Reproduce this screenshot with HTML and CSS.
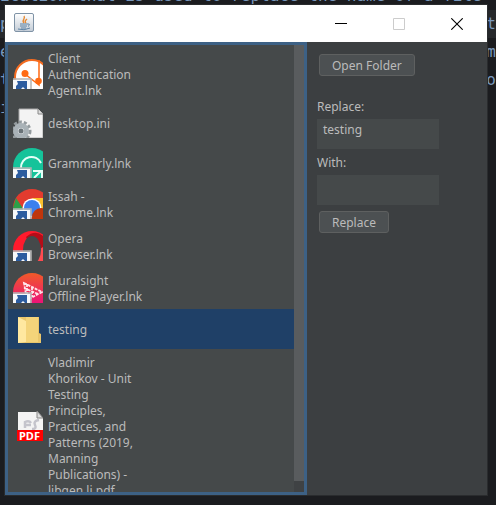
FILE: index.html
```
<!DOCTYPE html>
<html lang="en">
<head>
<meta charset="utf-8">
<title>File renamer</title>
<link rel="stylesheet" href="styles.css">
</head>
<body>
<div class="backdrop" aria-hidden="true">
  <div class="line"><span>ication that is used to replace the name of a file</span></div>
  <div class="line current"><span>p</span><span>t</span></div>
  <div class="line"><span>e</span><span>m</span></div>
  <div class="line"><span>t</span><span>o</span></div>
  <div class="line"><span>i</span></div>
</div>
<main class="window">
  <header class="titlebar">
    <svg class="java" viewBox="0 0 20 19">
      <defs><linearGradient id="jbg" x2="0" y2="1"><stop offset="0" stop-color="#fff"/><stop offset="1" stop-color="#c3ccd6"/></linearGradient></defs>
      <rect x=".5" y=".5" width="19" height="18" rx="1.5" fill="url(#jbg)" stroke="#7f93a6"/>
      <path d="M10 10C7 7 12 6 10 3M12 10C10 8 12 7 13 6" fill="none" stroke="#e58b35" stroke-width="1.4"/>
      <path d="M6 11h8M6 13h7M7 15h5M14 11q3 0 0 2.500M4 16q6 2 12-1" fill="none" stroke="#5c83a5"/>
    </svg>
    <div class="controls">
      <button type="button" aria-label="Minimize"><svg viewBox="0 0 12 12"><path d="M0 5.500h12" stroke="#000"/></svg></button>
      <button type="button" aria-label="Maximize" disabled><svg viewBox="0 0 12 12"><path d="M.5.5h11v11H.5z" fill="none" stroke="#ccc"/></svg></button>
      <button type="button" aria-label="Close"><svg viewBox="0 0 12 12"><path d="M.3.3l11.400 11.400M11.700.3L.3 11.700" stroke="#000" stroke-width="1.100"/></svg></button>
    </div>
  </header>
  <div class="content">
    <section class="files">
      <ul class="list">
        <li>
          <svg class="icon" viewBox="0 0 30 30">
            <circle cx="19" cy="18" r="17" fill="#fff" stroke="#f36c21" stroke-width="2"/>
            <path d="M26 1v25L12 15" fill="none" stroke="#ff6a13" stroke-width="1.500"/>
            <circle cx="12" cy="14.500" r="3.500" fill="#ff6a13"/><circle cx="25.500" cy="22" r="3.300" fill="#ff6a13"/>
            <use href="#shortcut"/>
          </svg>
          <span>Client Authentication Agent.lnk</span>
        </li>
        <li>
          <svg class="icon" viewBox="0 0 30 30">
            <path d="M6 1h19l5 5v24H6z" fill="#f3f3f3" stroke="#aaa"/><path d="M25 1v5h5" fill="#ddd" stroke="#888"/>
            <circle cx="8" cy="23" r="9" fill="none" stroke="#949b9e" stroke-width="3" stroke-dasharray="3 2"/>
            <circle cx="8" cy="23" r="5.500" fill="#e8edf0" stroke="#a9b2b7" stroke-width="5"/><circle cx="8" cy="23" r="2.500" fill="#697277"/>
          </svg>
          <span>desktop.ini</span>
        </li>
        <li>
          <svg class="icon" viewBox="0 0 30 30">
            <circle cx="19" cy="19" r="19" fill="#15c39a"/>
            <path d="M8 20a10.500 10.500 0 0 1 20-5" fill="none" stroke="#e5fff8" stroke-width="2"/>
            <path d="M20 23h10M29 22v8M28 23l-7 7" fill="none" stroke="#e5fff8" stroke-width="2"/>
            <use href="#shortcut"/>
          </svg>
          <span>Grammarly.lnk</span>
        </li>
        <li>
          <svg class="icon" viewBox="0 0 30 30">
            <circle cx="19" cy="19" r="19" fill="#e33b2e"/>
            <path d="M3 9l8 12v9H0V19z" fill="#2c9f48"/><path d="M19 9h11v11h-5z" fill="#fbc02d"/>
            <circle cx="19" cy="19" r="9.500" fill="#fff"/><circle cx="19" cy="19" r="8" fill="#3b80ed"/>
            <circle cx="28" cy="28" r="9" fill="#bf360c"/>
            <use href="#shortcut"/>
          </svg>
          <span>Issah - Chrome.lnk</span>
        </li>
        <li>
          <svg class="icon" viewBox="0 0 30 30">
            <circle cx="19" cy="19" r="19" fill="#ff1b2d"/><path d="M13 6Q22-2 30 5v25h-4z" fill="#b50d18"/><path d="M27 18l3-2v14h-6z" fill="#ff4b50"/>
            <ellipse cx="19" cy="19" rx="9" ry="14" fill="#45494a"/>
            <use href="#shortcut"/>
          </svg>
          <span>Opera Browser.lnk</span>
        </li>
        <li>
          <svg class="icon" viewBox="0 0 30 30">
            <defs><linearGradient id="ps" x2="0" y2="1"><stop offset="0" stop-color="#f05a28"/><stop offset="1" stop-color="#ec008c"/></linearGradient></defs>
            <circle cx="19" cy="19" r="19" fill="url(#ps)"/>
            <path d="M11 10l18 9-15 8zM11 15l14 6M14 11v15M19 14v10" fill="none" stroke="#ffe6ec" stroke-width="1.800" stroke-dasharray="3 1"/>
            <use href="#shortcut"/>
          </svg>
          <span>Pluralsight Offline&nbsp;Player.lnk</span>
        </li>
        <li class="selected">
          <svg class="icon" viewBox="0 0 30 30">
            <path d="M5 3h21v16l2 1v9H5z" fill="#e9c66b"/><path d="M13 3h12v25H13z" fill="#f4d47a"/><path d="M5 3l8 4v21l-8 1z" fill="#ffe8a0"/>
          </svg>
          <span>testing</span>
        </li>
        <li>
          <svg class="icon" viewBox="0 0 30 30">
            <path d="M5 1h20l5 6v12H5z" fill="#f4f4f4"/><path d="M24 0l6 7h-6z" fill="#ddd" stroke="#888"/>
            <path d="M12 17v-6q4-2 6 1M13 14h5M19 18q5 0 3-4t4-5" fill="none" stroke="#c4c4cc" stroke-width="2.500"/>
            <path d="M4 19h26v11H4z" fill="#f00"/>
            <text x="6" y="29" class="pdf">PDF</text>
          </svg>
          <span>Vladimir Khorikov - Unit Testing Principles, Practices, and Patterns (2019, Manning Publications) - libgen.li.pdf</span>
        </li>
      </ul>
      <div class="scrollbar"><div class="thumb"></div></div>
    </section>
    <form class="panel">
      <button type="button" class="btn open">Open Folder</button>
      <label for="from">Replace:</label>
      <textarea id="from">testing</textarea>
      <label for="to">With:</label>
      <textarea id="to"></textarea>
      <button type="button" class="btn">Replace</button>
    </form>
  </div>
</main>
<svg class="sprite" aria-hidden="true">
  <g id="shortcut"><path d="M0 20.500h17.500V30H0z" fill="#f6f8fa"/><path d="M0 20h18v10" fill="none" stroke="#b4b4b4" stroke-width="1.500"/><path d="M4 22h10v8h-2l-2-2-2 2H3v-3l2-2z" fill="#2c5c9f"/></g>
</svg>
</body>
</html>
```

FILE: styles.css
```
* { box-sizing: border-box; }

html, body { height: 100%; overflow: hidden; }

body {
  margin: 0;
  padding: 5px 9px 10px 5px;
  background: #1b1c1f;
  color: #bbbbbb;
  font: 12px/16px "Noto Sans", "Open Sans", sans-serif;
}

.backdrop {
  position: absolute;
  top: -18px;
  right: 0;
  left: 0;
  overflow: hidden;
  color: #7897bb;
  font: 16px/28px "DejaVu Sans Mono", monospace;
}

.line { display: flex; justify-content: space-between; height: 28px; white-space: nowrap; }

.current { background: #26282b; }

.window {
  position: relative;
  display: flex;
  flex-direction: column;
  height: 100%;
  background: #3c3f41;
  box-shadow: 0 0 0 1px #2a2c2e;
}

.titlebar {
  display: flex;
  flex: none;
  justify-content: space-between;
  height: 37px;
  padding-left: 9px;
  background: #fff;
}

.java { width: 20px; height: 19px; margin-top: 8px; }

.controls { display: flex; margin-right: 1px; }

.controls button {
  display: grid;
  place-items: center;
  width: 58px;
  padding: 0;
  border: 0;
  background: none;
}

.controls svg { width: 12px; height: 12px; }

.content { display: flex; flex: 1; min-height: 0; }

.files {
  display: flex;
  flex: 0 0 302px;
  border: 3px solid #3d6185;
  background: #45494a;
}

.list {
  flex: 1;
  margin: 0;
  padding: 0;
  overflow: hidden;
  list-style: none;
}

.list li {
  display: flex;
  gap: 5px;
  align-items: center;
  padding: 5px;
}

.list span { width: 92px; margin: 1px 0 -1px; }

.list .selected { background: #1f4067; }

.icon { flex: none; width: 30px; height: 30px; }

.pdf { fill: #fff; font: bold 11px "Noto Sans", sans-serif; }

.scrollbar { width: 10px; padding-bottom: 11px; background: #3f4244; }

.thumb { height: 100%; background: #595c5e; }

.panel {
  display: flex;
  flex-direction: column;
  align-items: flex-start;
  padding: 12px 10px;
}

.btn {
  height: 22px;
  margin: 0 2px;
  padding: 1px 12px 0;
  border: 1px solid #5e6060;
  border-radius: 3px;
  background: #4c5052;
  color: inherit;
  font: inherit;
}

.open { margin-bottom: 23px; }

.panel textarea {
  width: 122px;
  height: 30px;
  margin: 4px 0 6px;
  padding: 3px 6px;
  border: 0;
  background: #45494a;
  color: inherit;
  font: inherit;
  resize: none;
}

.sprite { position: absolute; width: 0; height: 0; }
```
